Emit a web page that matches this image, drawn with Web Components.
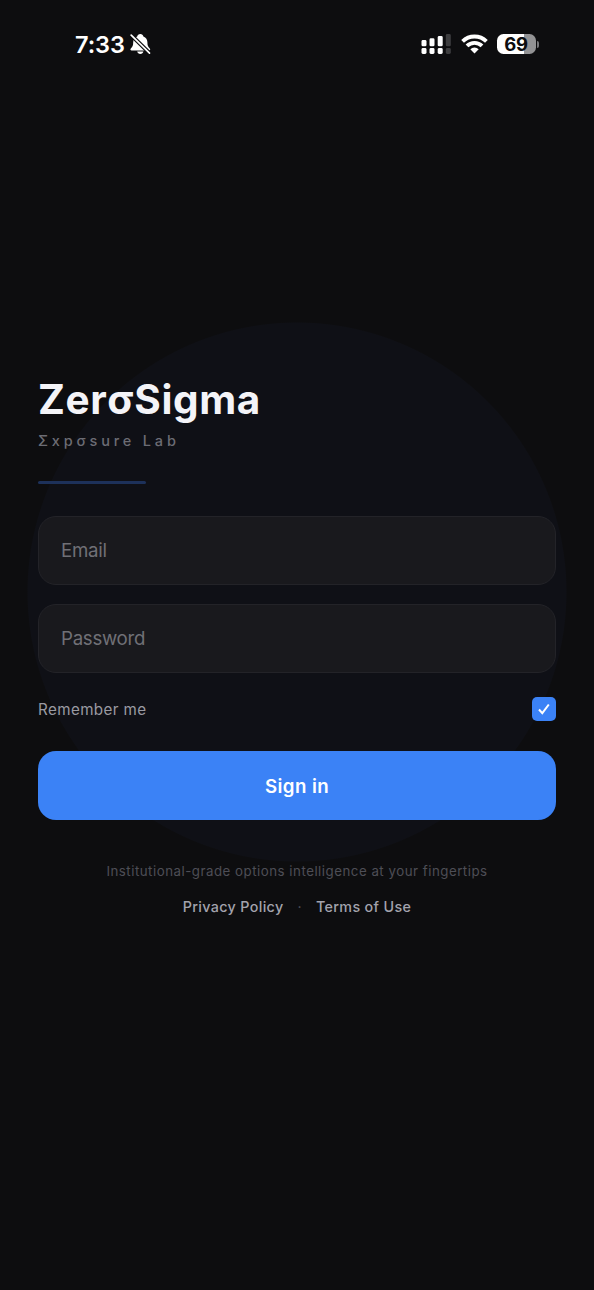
<!DOCTYPE html>
<html lang="en">
<head>
<meta charset="utf-8">
<meta name="viewport" content="width=device-width, initial-scale=1">
<title>ZerσSigma</title>
<style>
    body {
        margin: 0;
        background: #0d0d0f;
        font-family: Inter, "Liberation Sans", sans-serif;
        color: #f4f4f8;
    }
</style>
</head>
<body>
<login-screen></login-screen>
<script>
/* STATUS BAR */
class StatusBar extends HTMLElement {
    constructor() {
        super();
        this.attachShadow({mode: 'open'});
    }
    connectedCallback() {
        this.shadowRoot.innerHTML = `
        <style>
            :host {
                display: flex;
                justify-content: space-between;
                align-items: center;
                box-sizing: border-box;
                height: 88px;
                padding: 0 55px 0 75px;
                color: #fff;
            }
            .left, .right { display: flex; align-items: center; }
            .left { gap: 3px; }
            .time { font-size: 23.5px; line-height: 28px; font-weight: 600; letter-spacing: -0.1px; width: 52px; white-space: nowrap; padding-top: 1px; }
            .wifi { margin: 0 9px 0 10px; }
            .battery {
                display: grid;
                place-items: center;
                box-sizing: border-box;
                width: 39px;
                height: 20px;
                padding-right: 1px;
                border-radius: 6.5px;
                background: linear-gradient(90deg, #fff 69%, #929294 69%);
                color: #0d0d0f;
                font-size: 18.5px;
                line-height: 21px;
                font-weight: 700;
                letter-spacing: -0.2px;
            }
            .tip { width: 2px; height: 7px; margin-left: 1px; border-radius: 0 3px 3px 0; background: #77777a; }
            svg { display: block; }
        </style>
        <div class="left">
            <span class="time">7:33</span>
            <svg width="21" height="22" viewBox="0 0 21 22">
                <path d="M10.300 1c-1.700 0-2.800 1-3.100 2.400C4.500 4.500 3.200 6.600 3.200 9.300c0 3.400-.7 4.700-2.400 6.200-.8.800-.4 2 .8 2H19c1.200 0 1.600-1.200.8-2-1.700-1.500-2.400-2.800-2.400-6.200 0-2.700-1.300-4.800-4-5.900C13.100 2 12 1 10.300 1z" fill="#fff"/>
                <path d="M7.200 18.600h6.200c-.3 1.500-1.500 2.500-3.100 2.500s-2.800-1-3.100-2.500z" fill="#fff"/>
                <path d="M1 2l19 18.600" stroke="#0d0d0f" stroke-width="4"/>
                <path d="M1.200 2.200l18.300 17.900" stroke="#fff" stroke-width="1.700" stroke-linecap="round"/>
            </svg>
        </div>
        <div class="right">
            <svg width="31" height="20" viewBox="0 0 31 20">
                <g fill="#fff">
                    <rect x="1.500" y="6" width="5" height="6.300" rx="1.400"/>
                    <rect x="9.500" y="4.300" width="5" height="8" rx="1.400"/>
                    <rect x="17.700" y="2" width="5" height="10.300" rx="1.400"/>
                    <rect x="1.500" y="14" width="5" height="6" rx="1.400"/>
                    <rect x="9.500" y="14" width="5" height="6" rx="1.400"/>
                    <rect x="17.700" y="14" width="5" height="6" rx="1.400"/>
                </g>
                <g fill="#3d3d3f">
                    <rect x="25.800" y="0" width="5" height="12.300" rx="1.400"/>
                    <rect x="25.800" y="14" width="5" height="6" rx="1.400"/>
                </g>
            </svg>
            <svg class="wifi" width="27" height="20" viewBox="0 0 27 20">
                <g fill="none" stroke="#fff" stroke-width="3.900">
                    <path d="M1.600 7.300a17 17 0 0 1 23.800 0"/>
                    <path d="M6 11.900a10.700 10.700 0 0 1 15 0"/>
                </g>
                <path d="M13.500 19.400l-4.200-4.200a6 6 0 0 1 8.400 0z" fill="#fff"/>
            </svg>
            <span class="battery">69</span>
            <span class="tip"></span>
        </div>
        `;
    }
}
customElements.define('status-bar', StatusBar);

/* BRAND HEADER */
class BrandHeader extends HTMLElement {
    constructor() {
        super();
        this.attachShadow({mode: 'open'});
    }
    connectedCallback() {
        this.shadowRoot.innerHTML = `
        <style>
            :host { display: block; }
            h1 { margin: 0; font-size: 40.5px; line-height: 50px; font-weight: 700; letter-spacing: 0.6px; }
            p { margin: 6px 0 30px; font-size: 14.5px; line-height: 20px; font-weight: 550; letter-spacing: 3.82px; color: #6c6c74; }
            h1, p { white-space: nowrap; }
            .line { width: 108px; height: 3px; border-radius: 2px; background: #1d315a; }
        </style>
        <h1><slot></slot></h1>
        <p><slot name="subtitle"></slot></p>
        <div class="line"></div>
        `;
    }
}
customElements.define('brand-header', BrandHeader);

/* TEXT FIELD */
class TextField extends HTMLElement {
    constructor() {
        super();
        this.attachShadow({mode: 'open'});
    }
    connectedCallback() {
        this.shadowRoot.innerHTML = `
        <style>
            :host {
                display: flex;
                align-items: center;
                box-sizing: border-box;
                height: 69px;
                padding: 0 22px;
                border: 1.500px solid #232328;
                border-radius: 18px;
                background: #19191d;
                color: #707076;
                font-size: 18.7px;
                letter-spacing: -0.3px;
            }
        </style>
        <slot></slot>
        `;
    }
}
customElements.define('text-field', TextField);

/* CHECK ROW */
class CheckRow extends HTMLElement {
    constructor() {
        super();
        this.attachShadow({mode: 'open'});
    }
    connectedCallback() {
        this.shadowRoot.innerHTML = `
        <style>
            :host {
                display: flex;
                align-items: center;
                justify-content: space-between;
                height: 24px;
                color: #9a9aa2;
                font-size: 15.2px;
                letter-spacing: 0.4px;
            }
            .box { display: grid; place-items: center; width: 24px; height: 24px; border-radius: 5px; background: #3b82f6; }
        </style>
        <span><slot></slot></span>
        <span class="box">
            <svg width="12" height="12" viewBox="0 0 12 12" fill="none" stroke="#fff" stroke-width="2">
                <path d="M1 6.500l3.300 3.700L10.800 1.500"/>
            </svg>
        </span>
        `;
    }
}
customElements.define('check-row', CheckRow);

/* PRIMARY BUTTON */
class PrimaryButton extends HTMLElement {
    constructor() {
        super();
        this.attachShadow({mode: 'open'});
    }
    connectedCallback() {
        this.shadowRoot.innerHTML = `
        <style>
            :host { display: block; }
            button {
                display: block;
                width: 100%;
                height: 69px;
                padding: 1px 0 0;
                border: 0;
                border-radius: 18px;
                background: #3b82f6;
                color: #fff;
                font: 600 18.7px Inter, "Liberation Sans", sans-serif;
                letter-spacing: 0.4px;
            }
        </style>
        <button><slot></slot></button>
        `;
    }
}
customElements.define('primary-button', PrimaryButton);

/* FOOTER */
class LoginFooter extends HTMLElement {
    constructor() {
        super();
        this.attachShadow({mode: 'open'});
    }
    connectedCallback() {
        this.shadowRoot.innerHTML = `
        <style>
            :host { display: flex; flex-direction: column; align-items: center; gap: 16px; }
            p { margin: 0; font-size: 13.3px; line-height: 20px; letter-spacing: 0.5px; color: #4e4e56; white-space: nowrap; }
            nav { display: flex; gap: 14px; font-size: 14.3px; line-height: 20px; font-weight: 500; letter-spacing: 0.35px; color: #a3a3ad; white-space: nowrap; }
            a { color: inherit; text-decoration: none; }
            .dot { font-weight: 400; color: #55555d; }
        </style>
        <p><slot></slot></p>
        <nav>
            <a href="#">Privacy Policy</a>
            <span class="dot">·</span>
            <a href="#">Terms of Use</a>
        </nav>
        `;
    }
}
customElements.define('login-footer', LoginFooter);

/* LOGIN SCREEN */
class LoginScreen extends HTMLElement {
    constructor() {
        super();
        this.attachShadow({mode: 'open'});
    }
    connectedCallback() {
        this.shadowRoot.innerHTML = `
        <style>
            :host { display: block; width: 594px; height: 1290px; overflow: hidden; }
            main {
                display: flex;
                flex-direction: column;
                box-sizing: border-box;
                height: 1202px;
                padding: 287px 38px 0;
                /* soft disc behind the form */
                background: radial-gradient(circle at 297px 504px, #0f1016 269px, transparent 270px);
            }
            brand-header { margin-bottom: 32px; }
            text-field { margin-bottom: 19px; }
            check-row { margin: 5px 0 30px; }
            login-footer { margin-top: 41px; }
        </style>
        <status-bar></status-bar>
        <main>
            <brand-header>ZerσSigma<span slot="subtitle">Σxpσsure Lab</span></brand-header>
            <text-field>Email</text-field>
            <text-field>Password</text-field>
            <check-row>Remember me</check-row>
            <primary-button>Sign in</primary-button>
            <login-footer>Institutional-grade options intelligence at your fingertips</login-footer>
        </main>
        `;
    }
}
customElements.define('login-screen', LoginScreen);
</script>
</body>
</html>
